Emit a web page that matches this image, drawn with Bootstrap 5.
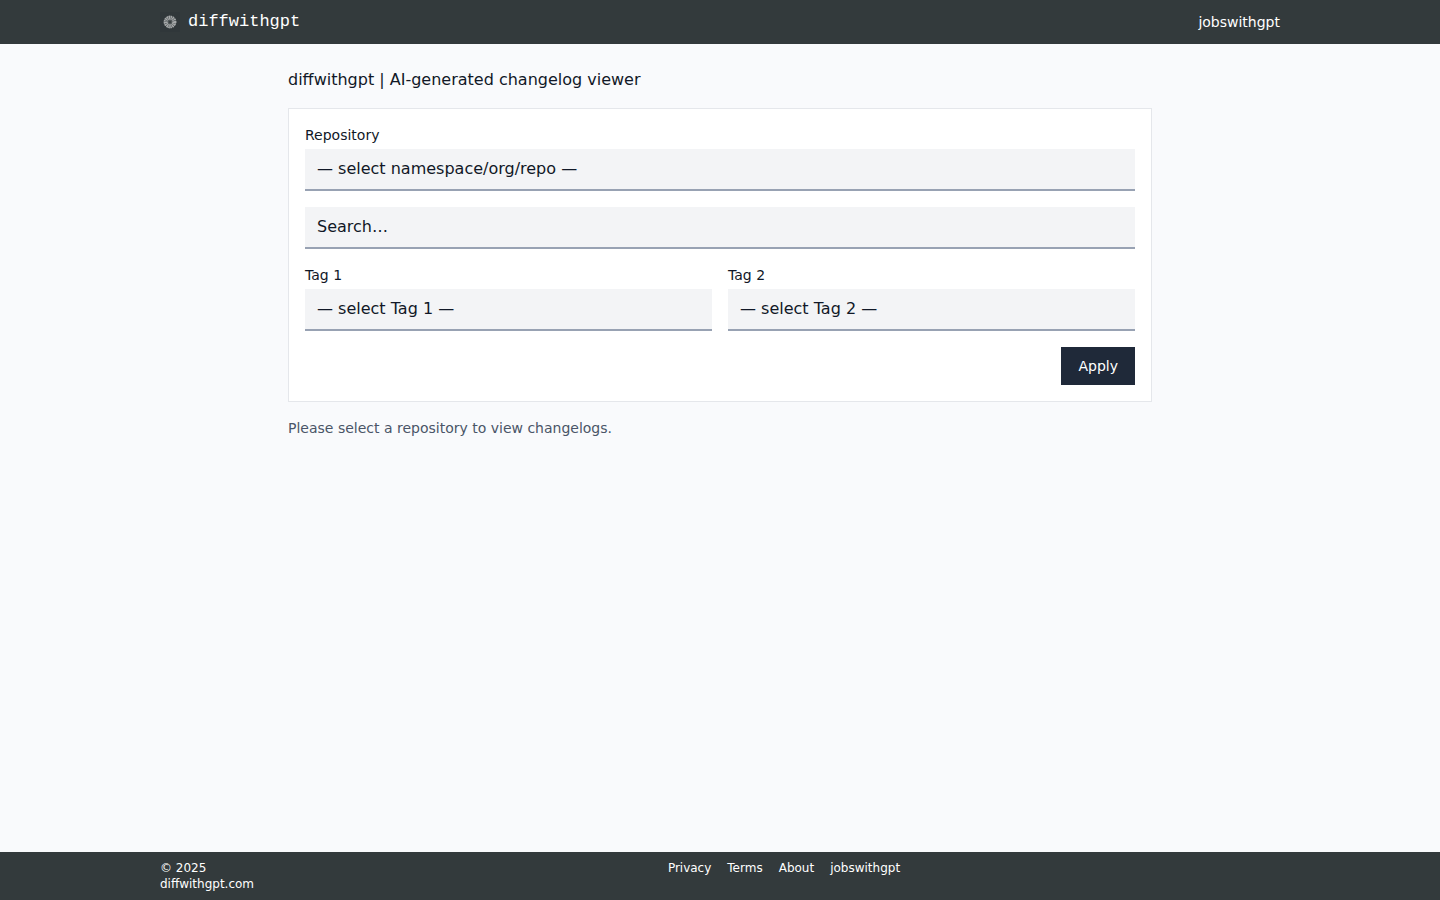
<!DOCTYPE html>
<html lang="en">
<head>
<meta charset="utf-8">
<meta name="viewport" content="width=device-width, initial-scale=1">
<title>diffwithgpt | AI-generated changelog viewer</title>
<link href="https://cdn.jsdelivr.net/npm/bootstrap@5.3.0/dist/css/bootstrap.min.css" rel="stylesheet">
<style>
  body {
    font-family: "DejaVu Sans", sans-serif;
    color: #111827;
    background: #f9fafc;
    line-height: 24px;
  }
  .bar { background: #333a3c; color: #fff; }
  .bar a { color: #fff; text-decoration: none; }
  .bar a:hover { text-decoration: underline; }
  .wide { max-width: 1152px; }
  .narrow { max-width: 896px; }
  .site-header .wide { height: 44px; }
  .brand { font-family: "Liberation Mono", monospace; font-size: 17px; line-height: 28px; }
  .text-14 { font-size: 14px; line-height: 20px; }
  .site-footer { font-size: 12px; line-height: 16px; }
  .copyright { width: 128px; }
  .title { font-size: 16px; line-height: 24px; }
  .panel { background: #fff; border: 1px solid #e5e7eb; }
  .field {
    display: block;
    width: 100%;
    height: 42px;
    padding: 0 12px;
    font-size: 16px;
    color: #111827;
    background: #f3f4f6;
    border: 0;
    border-bottom: 2px solid #98a2b3;
    border-radius: 0;
    appearance: none;
  }
  input.field { padding-bottom: 2px; }
  .field::placeholder { color: #111827; opacity: 1; }
  .apply { color: #fff; background: #1f2939; border-radius: 0; padding: 8px 16px; }
  .apply:hover { color: #fff; background: #334155; }
  .hint { color: #4a5567; }
</style>
</head>
<body class="d-flex flex-column min-vh-100">
<header class="site-header bar">
  <div class="wide container-fluid px-3 d-flex align-items-center justify-content-between">
    <a class="brand d-flex align-items-center gap-2" href="#">
      <svg width="20" height="20" viewBox="0 0 20 20" fill="none" aria-hidden="true">
        <rect width="20" height="20" fill="#30373a"/>
        <circle cx="10" cy="10" r="4.2" stroke="#a5a8a9" stroke-width="4" stroke-dasharray="1.25 .4"/>
        <circle cx="10" cy="10" r="5.9" stroke="#a5a8a9" stroke-width="1" stroke-dasharray="1.3 1.02"/>
        <circle cx="10" cy="10" r="2" fill="#555b5d"/>
        <circle cx="10" cy="10" r="1" fill="#30373a"/>
      </svg>
      <span>diffwithgpt</span>
    </a>
    <nav aria-label="Main"><a class="text-14 d-block" href="#">jobswithgpt</a></nav>
  </div>
</header>
<main class="narrow container-fluid px-3 py-4 flex-grow-1">
  <h1 class="title fw-normal mb-3">diffwithgpt | AI-generated changelog viewer</h1>
  <form class="panel p-3 mb-3">
    <div class="mb-3">
      <label class="text-14 d-block mb-1" for="repo">Repository</label>
      <select class="field" id="repo"><option>— select namespace/org/repo —</option></select>
    </div>
    <input class="field mb-3" type="text" placeholder="Search…" aria-label="Search">
    <div class="row g-3 mb-3">
      <div class="col-md-6">
        <label class="text-14 d-block mb-1" for="tag1">Tag 1</label>
        <select class="field" id="tag1"><option>— select Tag 1 —</option></select>
      </div>
      <div class="col-md-6">
        <label class="text-14 d-block mb-1" for="tag2">Tag 2</label>
        <select class="field" id="tag2"><option>— select Tag 2 —</option></select>
      </div>
    </div>
    <div class="d-flex justify-content-end">
      <button class="btn apply text-14" type="button">Apply</button>
    </div>
  </form>
  <p class="hint text-14 mb-0">Please select a repository to view changelogs.</p>
</main>
<footer class="site-footer bar">
  <div class="wide container-fluid px-3 py-2 d-flex align-items-start">
    <div class="copyright flex-shrink-0">© 2025<br>diffwithgpt.com</div>
    <nav class="flex-grow-1 d-flex justify-content-center gap-3" aria-label="Footer">
      <a href="#">Privacy</a>
      <a href="#">Terms</a>
      <a href="#">About</a>
      <a href="#">jobswithgpt</a>
    </nav>
  </div>
</footer>
<script src="https://cdn.jsdelivr.net/npm/bootstrap@5.3.0/dist/js/bootstrap.bundle.min.js"></script>
</body>
</html>
